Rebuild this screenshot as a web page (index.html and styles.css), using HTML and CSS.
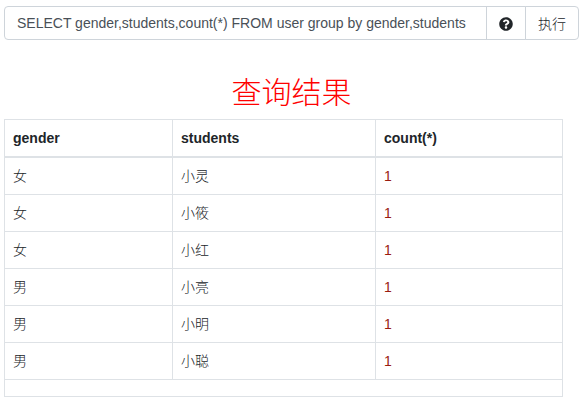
FILE: index.html
```html
<!DOCTYPE html>
<html lang="zh">
<head>
    <meta charset="UTF-8">
    <meta name="viewport" content="width=device-width, initial-scale=1.0">
    <title>查询结果</title>
    <link rel="stylesheet" href="styles.css">
</head>
<body>
    <div class="input-group">
        <input type="text" class="sql-input" value="SELECT gender,students,count(*) FROM user group by gender,students">
        <button class="addon help-btn" type="button">
            <svg class="help-icon" viewBox="0 0 512 512"><path d="M504 256c0 136.997-111.043 248-248 248S8 392.997 8 256C8 119.083 119.043 8 256 8s248 111.083 248 248zM262.655 90c-54.497 0-89.255 22.957-116.549 63.758-3.536 5.286-2.353 12.415 2.715 16.258l34.699 26.31c5.205 3.947 12.621 3.008 16.665-2.122 17.864-22.658 30.113-35.797 57.303-35.797 20.429 0 45.698 13.148 45.698 32.958 0 14.976-12.363 22.667-32.534 33.976C247.128 238.528 216 254.941 216 296v4c0 6.627 5.373 12 12 12h56c6.627 0 12-5.373 12-12v-1.333c0-28.462 83.186-29.647 83.186-106.667 0-58.002-60.165-102-116.531-102zM256 338c-25.365 0-46 20.635-46 46 0 25.364 20.635 46 46 46s46-20.636 46-46c0-25.365-20.635-46-46-46z"/></svg>
        </button>
        <button class="addon run-btn" type="button">执行</button>
    </div>

    <h2 class="title">查询结果</h2>

    <table class="result-table">
        <thead>
            <tr>
                <th class="col-gender">gender</th>
                <th class="col-students">students</th>
                <th>count(*)</th>
            </tr>
        </thead>
        <tbody>
            <tr class="first-row"><td>女</td><td>小灵</td><td class="num">1</td></tr>
            <tr><td>女</td><td>小筱</td><td class="num">1</td></tr>
            <tr><td>女</td><td>小红</td><td class="num">1</td></tr>
            <tr><td>男</td><td>小亮</td><td class="num">1</td></tr>
            <tr><td>男</td><td>小明</td><td class="num">1</td></tr>
            <tr><td>男</td><td>小聪</td><td class="num">1</td></tr>
            <tr><td class="empty" colspan="3"></td></tr>
        </tbody>
    </table>
</body>
</html>
```

FILE: styles.css
```css
body {
    font-family: "Liberation Sans", "Noto Sans CJK SC", sans-serif;
    font-size: 14px;
    color: #212529;
    background-color: #fff;
    margin: 0;
    padding: 6px 5px 0 4px;
}

.input-group {
    display: flex;
    height: 34px;
}

.sql-input {
    flex: 1;
    min-width: 0;
    padding: 0 12px;
    font-family: inherit;
    font-size: 14px;
    color: #495057;
    border: 1px solid #ced4da;
    border-radius: 4px 0 0 4px;
    outline: none;
}

.addon {
    margin-left: -1px;
    padding: 0;
    font-family: inherit;
    font-size: 14px;
    font-weight: 300;
    color: #212529;
    background-color: #fff;
    border: 1px solid #ced4da;
}

.help-btn {
    width: 40px;
    padding-top: 1px;
    display: flex;
    align-items: center;
    justify-content: center;
}

.help-icon {
    width: 14px;
    height: 14px;
    fill: #212529;
}

.run-btn {
    width: 54px;
    border-radius: 0 4px 4px 0;
}

.title {
    margin: 34px 0 7px;
    font-size: 30px;
    line-height: 38px;
    font-weight: 300;
    color: #f00;
    text-align: center;
}

.result-table {
    width: 559px;
    border-collapse: collapse;
    table-layout: fixed;
}

.result-table th,
.result-table td {
    height: 37px;
    box-sizing: border-box;
    padding: 0 8px;
    text-align: left;
    border: 1px solid #dee2e6;
}

.result-table thead th {
    border-bottom-width: 2px;
}

.result-table td {
    padding-bottom: 2px;
    font-weight: 300;
}

.result-table .first-row td {
    height: 38px;
}

.col-gender {
    width: 168px;
}

.col-students {
    width: 203px;
}

.result-table .num {
    padding-bottom: 0;
    font-weight: 400;
    color: #9a1c10;
}

.result-table .empty {
    height: 17px;
    padding: 0;
}
```
